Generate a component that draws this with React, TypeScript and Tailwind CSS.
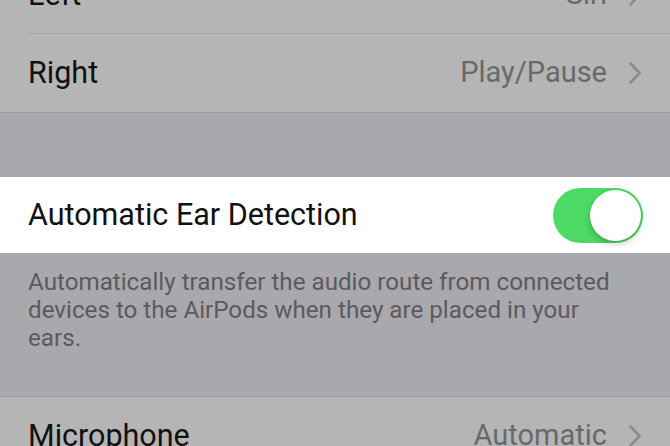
import React from 'react'

const font = { fontFamily: 'Roboto, "Noto Sans", "Liberation Sans", sans-serif' }

function Chevron() {
  return (
    <svg width="14" height="22" viewBox="0 0 14 22" className="shrink-0">
      <path d="M2.5 1.5 L11.5 11 L2.5 20.5" fill="none" stroke="#8b8b8d" strokeWidth="2.6" strokeLinecap="round" strokeLinejoin="round" />
    </svg>
  )
}

function NavRow({ label, value, inset = true }: { label: string; value: string; inset?: boolean }) {
  return (
    <div className="pl-[28px]">
      <div
        className={
          'flex h-[78px] items-center pr-[28px] ' + (inset ? 'border-b border-[#a6a6a8]' : '')
        }
      >
        <span className="flex-1 text-[30.5px] text-[#111111]">{label}</span>
        <span className="mr-[21px] text-[29px] text-[#696969]">{value}</span>
        <Chevron />
      </div>
    </div>
  )
}

function Toggle() {
  return (
    <div className="flex h-[55px] w-[90px] items-center justify-end rounded-full bg-[#4cd964] p-[2px]">
      <div className="h-[51px] w-[51px] rounded-full bg-white shadow-[0_3px_6px_rgba(0,0,0,0.22)]" />
    </div>
  )
}

export default function App() {
  return (
    <div className="h-[446px] w-[670px] overflow-hidden bg-[#a9a8ad]" style={font}>
      <div className="-mt-[44px]">
        <div className="border-b border-[#9c9ca0] bg-[#b5b5b5]">
          <NavRow label="Left" value="Siri" />
          <NavRow label="Right" value="Play/Pause" inset={false} />
        </div>

        <div className="h-[64px]" />

        <div className="flex h-[76px] items-center bg-white pl-[28px] pr-[27px]">
          <span className="flex-1 text-[30.5px] text-[#111111]">Automatic Ear Detection</span>
          <Toggle />
        </div>

        <div className="pb-[44px] pl-[28px] pt-[15px] text-[24.2px] leading-[28px] text-[#5b5a5f]">
          <div className="whitespace-nowrap">Automatically transfer the audio route from connected</div>
          <div className="whitespace-nowrap">devices to the AirPods when they are placed in your</div>
          <div className="whitespace-nowrap">ears.</div>
        </div>

        <div className="border-t border-[#9c9ca0] bg-[#b5b5b5]">
          <NavRow label="Microphone" value="Automatic" />
        </div>
      </div>
    </div>
  )
}
